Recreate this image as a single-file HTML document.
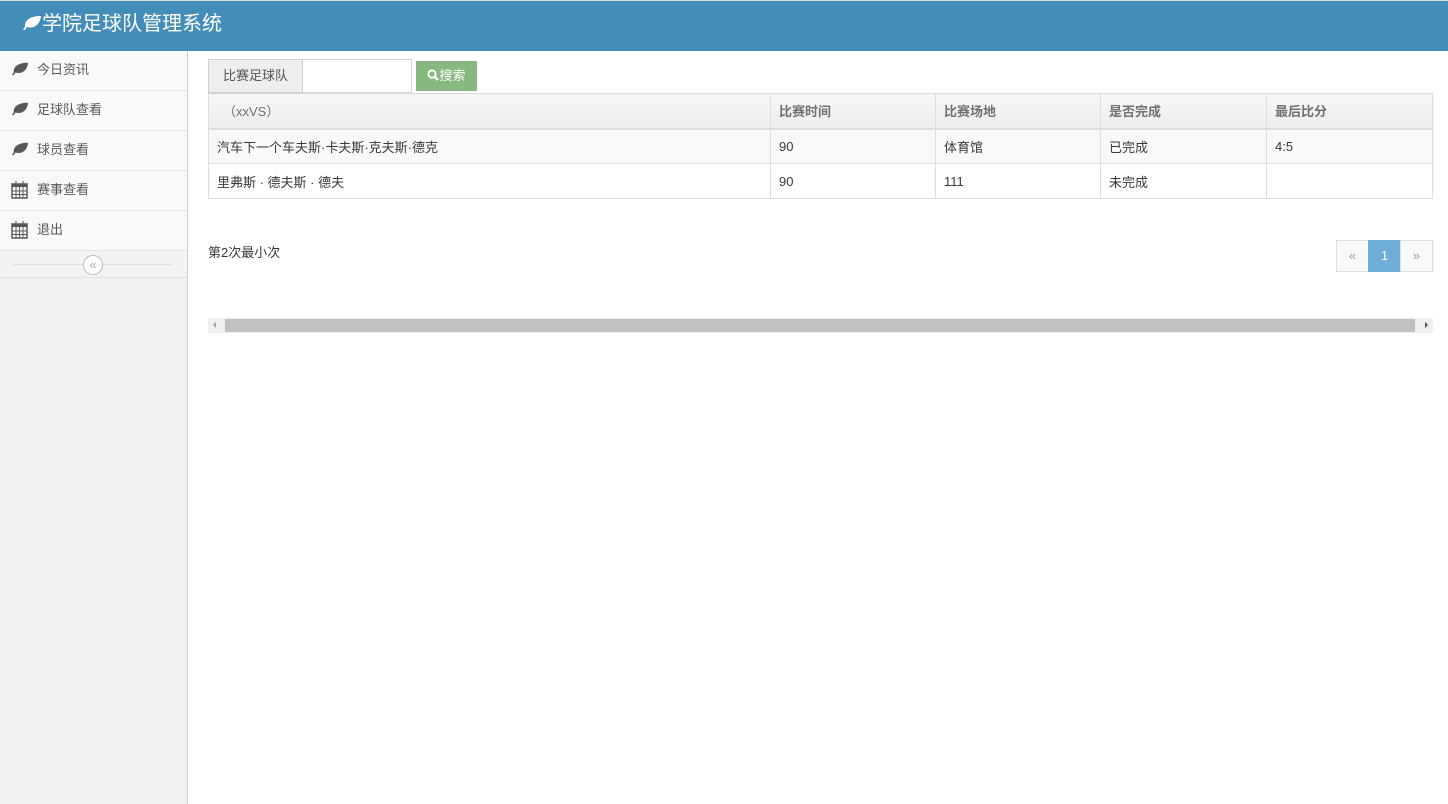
<!DOCTYPE html>
<html><head><meta charset="utf-8"><style>
*{box-sizing:border-box;margin:0;padding:0}
body{width:1448px;height:804px;overflow:hidden;background:#fff;font-family:"Liberation Sans","Noto Sans CJK SC",sans-serif;font-size:13px;color:#393939}
.top{position:absolute;left:0;top:0;width:1448px;height:51px;background:#438eb9;border-top:1px solid #ddd}
.top .t{position:absolute;left:22px;top:11px;color:#fff;font-size:20px;line-height:24px;white-space:nowrap}
.side{position:absolute;left:0;top:51px;width:188px;height:753px;background:#f2f2f2;border-right:1px solid #ccc}
.side .it{height:40px;border-bottom:1px solid #e5e5e5;background:#f9f9f9;line-height:38px;padding-left:37px;position:relative;color:#585858}
.side .it svg{position:absolute;left:11px;top:10px}
.coll{height:27px;border-bottom:1px solid #e0e0e0;position:relative;background:#f3f3f3}
.coll:before{content:"";position:absolute;left:13px;right:15px;top:13px;border-top:1px solid #e0e0e0}
.coll span{position:absolute;left:83px;top:4px;width:20px;height:20px;border:1px solid #bbb;border-radius:50%;background:#fff;text-align:center;line-height:17px;font-size:13px;color:#aaa}
.main{position:absolute;left:208px;top:59px;width:1225px;height:300px}
.lab{position:absolute;left:0;top:0;width:95px;height:34px;background:#eee;border:1px solid #ccc;line-height:32px;text-align:center;color:#555}
.inp{position:absolute;left:95px;top:0;width:109px;height:34px;border:1px solid #d5d5d5;border-left:none;background:#fff}
.btn{position:absolute;left:208px;top:2px;width:61px;height:30px;background:#87b87f;color:#fff;line-height:30px;text-align:center}
table{position:absolute;left:0;top:34px;width:1225px;border-collapse:collapse}
td,th{border:1px solid #ddd;padding:0 8px;text-align:left}
th{height:35px;background:linear-gradient(#f8f8f8,#ececec);font-weight:bold;color:#707070;border-bottom:2px solid #ddd}
td{height:35px}
tr.a td{background:#f9f9f9}
.info{position:absolute;left:0;top:183px;color:#393939;white-space:nowrap}
.pg{position:absolute;left:1128px;top:181px;height:32px;display:flex}
.pg div{width:33px;height:32px;border:1px solid #ddd;background:#fafafa;text-align:center;line-height:30px;color:#999}
.pg .on{background:#6faed9;border-color:#6faed9;color:#fff;margin:0 -1px}
.sb{position:absolute;left:0;top:259px;width:1225px;height:15px;background:#f1f1f1}
.sb .th{position:absolute;left:17px;top:1px;right:18px;height:13px;background:#c1c1c1}
</style></head><body>
<div class="top"><div class="t"><svg width="20" height="16" viewBox="0 0 20 16" style="vertical-align:-1px"><path d="M1 15C4 9 9 6 14 5 9 7 5 11 3 15ZM3 11C3 4 10 1 19 1 18 9 13 14 5 12Z" fill="#fff"/></svg>学院足球队管理系统</div></div>
<div class="side">
<div class="it"><svg width="18" height="16" viewBox="0 0 20 16"><path d="M1 15C4 9 9 6 14 5 9 7 5 11 3 15ZM3 11C3 4 10 1 19 1 18 9 13 14 5 12Z" fill="#585858"/></svg>今日资讯</div>
<div class="it"><svg width="18" height="16" viewBox="0 0 20 16"><path d="M1 15C4 9 9 6 14 5 9 7 5 11 3 15ZM3 11C3 4 10 1 19 1 18 9 13 14 5 12Z" fill="#585858"/></svg>足球队查看</div>
<div class="it"><svg width="18" height="16" viewBox="0 0 20 16"><path d="M1 15C4 9 9 6 14 5 9 7 5 11 3 15ZM3 11C3 4 10 1 19 1 18 9 13 14 5 12Z" fill="#585858"/></svg>球员查看</div>
<div class="it"><svg width="17" height="18" viewBox="0 0 17 18"><rect x="1" y="3" width="15" height="14" fill="none" stroke="#585858" stroke-width="1.5"/><rect x="1" y="3" width="15" height="3" fill="#585858"/><path d="M5 0v5M12 0v5M1 10h15M1 13.5h15M5 6v11M8.5 6v11M12 6v11" stroke="#585858"/></svg>赛事查看</div>
<div class="it"><svg width="17" height="18" viewBox="0 0 17 18"><rect x="1" y="3" width="15" height="14" fill="none" stroke="#585858" stroke-width="1.5"/><rect x="1" y="3" width="15" height="3" fill="#585858"/><path d="M5 0v5M12 0v5M1 10h15M1 13.5h15M5 6v11M8.5 6v11M12 6v11" stroke="#585858"/></svg>退出</div>
<div class="coll"><span>«</span></div>
</div>
<div class="main">
<div class="lab">比赛足球队</div><div class="inp"></div>
<div class="btn"><svg width="12" height="12" viewBox="0 0 12 12" style="vertical-align:-1px"><circle cx="5" cy="5" r="3.6" fill="none" stroke="#fff" stroke-width="2"/><path d="M7.5 7.5L11 11" stroke="#fff" stroke-width="2.4"/></svg>搜索</div>
<table>
<tr><th style="width:562px;font-weight:normal;padding-left:14px;color:#707070">（xxVS）</th><th style="width:165px">比赛时间</th><th style="width:165px">比赛场地</th><th style="width:166px">是否完成</th><th>最后比分</th></tr>
<tr class="a"><td>汽车下一个车夫斯·卡夫斯·克夫斯·德克</td><td>90</td><td>体育馆</td><td>已完成</td><td>4:5</td></tr>
<tr><td>里弗斯 · 德夫斯 · 德夫</td><td>90</td><td>111</td><td>未完成</td><td></td></tr>
</table>
<div class="info">第2次最小次</div>
<div class="pg"><div>«</div><div class="on">1</div><div>»</div></div>
<div class="sb"><span style="position:absolute;left:5px;top:4px;border:3px solid transparent;border-right-color:#a3a3a3;border-left:0"></span><div class="th"></div><span style="position:absolute;right:5px;top:4px;border:3px solid transparent;border-left-color:#505050;border-right:0"></span></div>
</div>
</body></html>
